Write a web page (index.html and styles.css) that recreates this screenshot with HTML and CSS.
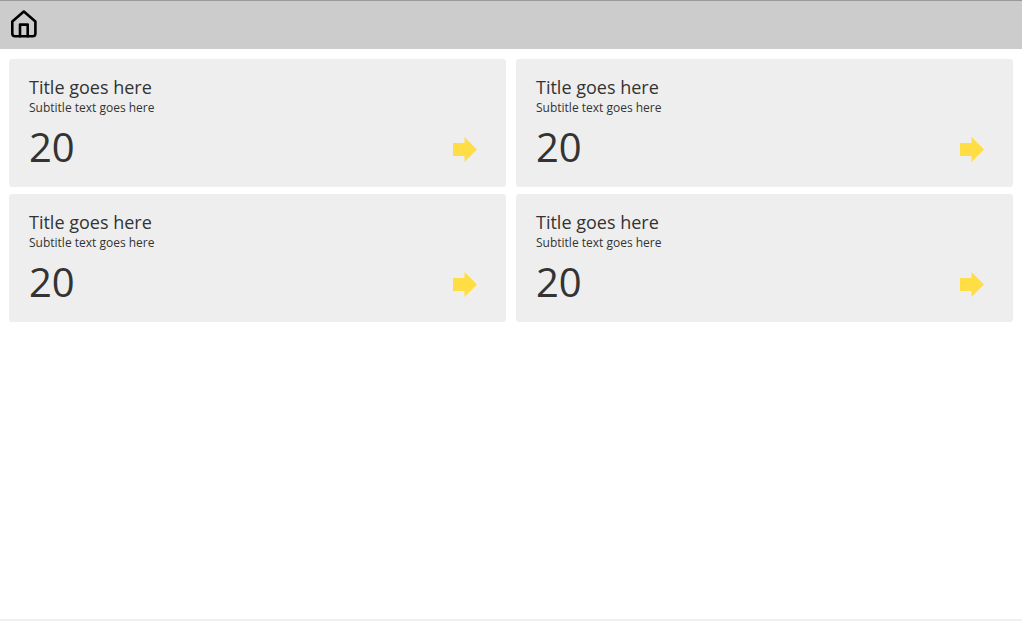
FILE: index.html
```html
<!DOCTYPE html>
<html lang="en">
<head>
    <meta charset="UTF-8">
    <meta name="viewport" content="width=device-width, initial-scale=1.0">
    <title>Dashboard</title>
    <link rel="stylesheet" href="styles.css">
</head>
<body>

    <header class="top-bar">
        <a href="#" class="home-link" aria-label="Home">
            <svg width="28" height="28" viewBox="0 0 28 28" fill="none" stroke="#000" stroke-width="2.6" stroke-linejoin="round" stroke-linecap="round">
                <path d="M13.85 1.5 L25.4 11.5 V23.4 Q25.4 26.2 22.6 26.2 H5.1 Q2.3 26.2 2.3 23.4 V11.5 Z"/>
                <path d="M10 26.2 V14.6 H17.7 V26.2"/>
            </svg>
        </a>
    </header>

    <main class="cards">
        <div class="card">
            <h1 class="card-title">Title goes here</h1>
            <p class="card-subtitle">Subtitle text goes here</p>
            <div class="card-row">
                <span class="card-number">20</span>
                <svg class="card-arrow" width="24" height="25" viewBox="0 0 24 25"><path d="M0 6 H11.5 V0 L24 12.5 L11.5 25 V19 H0 Z"/></svg>
            </div>
        </div>
        <div class="card">
            <h1 class="card-title">Title goes here</h1>
            <p class="card-subtitle">Subtitle text goes here</p>
            <div class="card-row">
                <span class="card-number">20</span>
                <svg class="card-arrow" width="24" height="25" viewBox="0 0 24 25"><path d="M0 6 H11.5 V0 L24 12.5 L11.5 25 V19 H0 Z"/></svg>
            </div>
        </div>
        <div class="card">
            <h1 class="card-title">Title goes here</h1>
            <p class="card-subtitle">Subtitle text goes here</p>
            <div class="card-row">
                <span class="card-number">20</span>
                <svg class="card-arrow" width="24" height="25" viewBox="0 0 24 25"><path d="M0 6 H11.5 V0 L24 12.5 L11.5 25 V19 H0 Z"/></svg>
            </div>
        </div>
        <div class="card">
            <h1 class="card-title">Title goes here</h1>
            <p class="card-subtitle">Subtitle text goes here</p>
            <div class="card-row">
                <span class="card-number">20</span>
                <svg class="card-arrow" width="24" height="25" viewBox="0 0 24 25"><path d="M0 6 H11.5 V0 L24 12.5 L11.5 25 V19 H0 Z"/></svg>
            </div>
        </div>
    </main>

</body>
</html>
```

FILE: styles.css
```css
html, body {
    height: 100%;
}

body {
    font-family: 'Open Sans', sans-serif;
    margin: 0;
    padding: 0;
    background-color: white;
    color: #333;
    display: flex;
    flex-direction: column;
    box-sizing: border-box;
    border-bottom: 2px solid #f0f0f0;
}

.top-bar {
    height: 48px;
    flex-shrink: 0;
    display: flex;
    align-items: center;
    padding-left: 10px;
    background-color: #cccccc;
    border-top: 1px solid #999;
}

.home-link {
    display: flex;
    margin-top: -2px;
}

.cards {
    display: grid;
    grid-template-columns: 497px 497px;
    grid-auto-rows: 128px;
    column-gap: 10px;
    row-gap: 7px;
    padding: 10px 9px;
}

.card {
    background-color: #eeeeee;
    border-radius: 3px;
    padding: 16px 29px 0 20px;
}

.card-title {
    margin: 0;
    font-size: 18px;
    font-weight: 400;
    line-height: 24px;
}

.card-subtitle {
    margin: 1px 0 0 0;
    font-size: 12px;
    line-height: 16px;
}

.card-row {
    display: flex;
    justify-content: space-between;
    align-items: center;
    margin-top: 6px;
}

.card-number {
    font-size: 40px;
    line-height: 50px;
}

.card-arrow {
    fill: #ffdd44;
    margin-top: 5px;
}
```
